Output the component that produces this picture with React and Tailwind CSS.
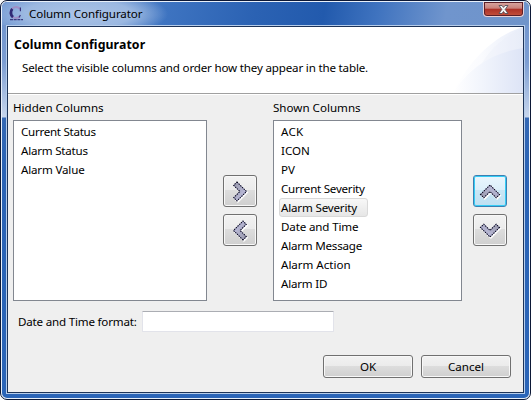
const hidden = [
  { label: "Current Status", spacing: "tracking-[-0.28px]" },
  { label: "Alarm Status", spacing: "tracking-[-0.22px]" },
  { label: "Alarm Value", spacing: "tracking-[-0.18px]" },
];
const shown = [
  { label: "ACK", spacing: "tracking-[0.2px]" },
  { label: "ICON", spacing: "tracking-normal" },
  { label: "PV", spacing: "tracking-normal" },
  { label: "Current Severity", spacing: "tracking-[-0.25px]" },
  { label: "Alarm Severity", spacing: "tracking-[-0.18px]", selected: true },
  { label: "Date and Time", spacing: "tracking-[-0.15px]" },
  { label: "Alarm Message", spacing: "tracking-[-0.22px]" },
  { label: "Alarm Action", spacing: "tracking-[-0.03px]" },
  { label: "Alarm ID", spacing: "tracking-[-0.22px]" },
];

const rotations = { right: 0, down: 90, left: 180, up: 270 };

// Chevron with a dotted dark edge and a white drop highlight.
function Chevron({ dir }) {
  const r = `rotate(${rotations[dir]} 16 15.5)`;
  const d = "M13 6 L22.5 15.5 L13 25 L9.7 21.7 L15.9 15.5 L9.7 9.3 Z";
  const id = `chev-${dir}`;
  return (
    <svg width="32" height="30" viewBox="0 0 32 30">
      <defs>
        <linearGradient id={id} x1="0" y1="0" x2="1" y2="1">
          <stop offset="0" stopColor="#9797a8" />
          <stop offset="1" stopColor="#c6c6ea" />
        </linearGradient>
      </defs>
      <g transform="translate(.9 1.1)">
        <path d={d} transform={r} fill="#fff" stroke="#fff" strokeWidth="1.4" />
      </g>
      <path d={d} transform={r} fill={`url(#${id})`} stroke="#9a9abb" strokeWidth="1" />
      <path d={d} transform={r} fill="none" stroke="#0b0b20" strokeWidth="1.1" strokeDasharray="1.3 1.1" />
    </svg>
  );
}

function ArrowButton({ dir, active }) {
  return (
    <button
      className={
        "flex h-8 w-[34px] items-center justify-center rounded-[3px] border " +
        (active
          ? "border-[#3c7fb1] bg-[linear-gradient(#eaf6fd_0%,#dceffa_46%,#c9e6f5_47%,#bfe0f2_100%)] shadow-[inset_0_0_0_1px_#35cdf6]"
          : "border-[#707070] bg-[linear-gradient(#f2f2f2_0%,#ebebeb_46%,#dddddd_47%,#cfcfcf_100%)] shadow-[inset_0_0_0_1px_#f8f8f8]")
      }
    >
      <Chevron dir={dir} />
    </button>
  );
}

function PushButton({ children }) {
  return (
    <button className="flex h-[23px] w-[90px] items-center justify-center rounded-[3px] border border-[#707070] bg-[linear-gradient(#f2f2f2_0%,#ebebeb_48%,#dddddd_49%,#cfcfcf_100%)] pb-px shadow-[inset_0_0_0_1px_#f8f8f8]">
      {children}
    </button>
  );
}

export default function App() {
  return (
    <div className="h-[400px] w-[531px] bg-[#fafafa] font-['Noto_Sans','Open_Sans',sans-serif] text-[11.6px] leading-[19px] whitespace-nowrap text-black">
      <div className="h-full rounded-[7px] border border-[#0c1836] bg-[#e8f0fa] p-px">
        <div className="flex h-full flex-col rounded-[5px] bg-[linear-gradient(#6d92cc_0px,#7c9dd2_60px,#c6d5ec_115px,#3468b4_116px,#2a63b5_170px,#2b65b8_100%)] px-1 pb-1">
          <header className="-mx-1 flex h-[23px] shrink-0 items-start rounded-t-[5px] bg-[radial-gradient(ellipse_90px_24px_at_76px_12px,#abc3e6_0%,#9bb8e1_60%,transparent_100%),linear-gradient(100deg,#7298d1_0%,#6f96d0_18%,#3e74c1_31%,#2b62b3_48%,#225aad_61%,#3f73bf_71%,#7095cd_84%,#6f94ca_100%)]">
            <svg className="mt-[3px] ml-[6px] shrink-0" width="16" height="16" viewBox="0 0 16 16" fill="none">
              <path d="M12 4C10.2 2.1 7.5 1.8 5.5 2.7C2.3 4.2 1.7 9.3 4 11.8C6.1 13.7 9.8 13.3 11.8 11.3" stroke="#a08fc6" strokeWidth="2" />
              <path d="M4.3 3.9C2.3 6.1 2.3 10 5 12.2" stroke="#302a75" strokeWidth="2.8" />
              <path d="M12.4 2.5V6.2M12.4 10L11 12.5" stroke="#3a347e" strokeWidth="1.2" />
              <path d="M2 14.7H15" stroke="#393b80" strokeWidth="1.2" strokeDasharray="3 .7" />
            </svg>
            <h1 className="ml-[5px] pt-[2px] tracking-[-0.1px]">Column Configurator</h1>
            <button className="mr-[5px] ml-auto flex h-[15px] w-[41px] items-center justify-center rounded-b-[4px] border border-t-0 border-[#e9cfd4] bg-[linear-gradient(#d9a8a3_0%,#c9807a_45%,#ad3127_50%,#c4513d_100%)] shadow-[inset_0_0_0_1px_#5b1f28]">
              <svg width="11" height="9" viewBox="0 0 11 9">
                <path d="M1 .5H4L5.5 2.4L7 .5H10L7.2 4.4L10 8.5H7L5.5 6.5L4 8.5H1L3.8 4.4Z" fill="#f4f4f4" stroke="#57505a" strokeWidth=".9" />
              </svg>
            </button>
          </header>
          <div className="min-h-0 flex-1 border border-[#b6cdeb]">
            <main className="flex h-full flex-col border border-[#1d3358] bg-[#efefef]">
              <section className="flex h-[67px] shrink-0 justify-between border-b border-[#a0a0a0] bg-white">
                <div className="pl-[6px]">
                  <h2 className="pt-2 text-[12.3px] font-bold tracking-[0.1px]">Column Configurator</h2>
                  <p className="pt-[4px] pl-2 tracking-[-0.185px]">Select the visible columns and order how they appear in the table.</p>
                </div>
                <svg className="shrink-0" width="75" height="66" viewBox="0 0 75 66">
                  <defs>
                    <linearGradient id="wash" gradientUnits="userSpaceOnUse" x1="5" y1="0" x2="75" y2="0">
                      <stop offset="0" stopColor="#fff" />
                      <stop offset=".4" stopColor="#fafbfe" />
                      <stop offset="1" stopColor="#e8edf9" />
                    </linearGradient>
                    <linearGradient id="wash2" gradientUnits="userSpaceOnUse" x1="5" y1="0" x2="75" y2="0">
                      <stop offset="0" stopColor="#fff" />
                      <stop offset=".4" stopColor="#f2f5fc" />
                      <stop offset="1" stopColor="#dde4f6" />
                    </linearGradient>
                  </defs>
                  <path d="M5 66C19 37 44 9 75 0V66Z" fill="url(#wash)" />
                  <path d="M27 50C36 29 52 10 75 2V66H27Z" fill="#e6ebf8" opacity=".25" />
                  <path d="M5 66C20 42 43 26 75 21V66Z" fill="url(#wash2)" />
                </svg>
              </section>
              <section className="flex h-[207px] shrink-0 border-t border-white pl-[5px]">
                <div className="w-[194px]">
                  <h3 className="h-[25px] pt-[3px]">Hidden Columns</h3>
                  <ul className="h-[181px] border border-[#828790] bg-white pt-px pl-[7px]">
                    {hidden.map(({ label, spacing }) => (
                      <li key={label} className={`h-[19px] ${spacing}`}>{label}</li>
                    ))}
                  </ul>
                </div>
                <div className="flex w-[66px] flex-col items-center gap-[7px] pt-[80px]">
                  <ArrowButton dir="right" />
                  <ArrowButton dir="left" />
                </div>
                <div className="w-[189px]">
                  <h3 className="h-[25px] pt-[3px]">Shown Columns</h3>
                  <ul className="h-[181px] border border-[#828790] bg-white pt-px pl-[5px]">
                    {shown.map(({ label, spacing, selected }) => (
                      <li
                        key={label}
                        className={`${spacing} ${
                          selected
                            ? "h-[19px] w-[89px] rounded-[3px] border border-[#d9d9d9] bg-[linear-gradient(#f8f8f8,#e6e6e6)] pl-px leading-[17px]"
                            : "h-[19px] pl-[2px]"
                        }`}
                      >
                        {label}
                      </li>
                    ))}
                  </ul>
                </div>
                <div className="ml-[11px] flex flex-col gap-[7px] pt-[80px]">
                  <ArrowButton dir="up" active />
                  <ArrowButton dir="down" />
                </div>
              </section>
              <label className="mt-[10px] flex h-[21px] shrink-0 items-center pl-[10px]">
                <span className="w-[124px] tracking-[-0.2px]">Date and Time format:</span>
                <input className="h-[21px] w-[192px] rounded-[1px] border border-[#e2e3ea] border-t-[#abadb3] bg-white" />
              </label>
              <footer className="mt-[23px] flex justify-end gap-2 pr-3">
                <PushButton>OK</PushButton>
                <PushButton>Cancel</PushButton>
              </footer>
            </main>
          </div>
        </div>
      </div>
    </div>
  );
}
